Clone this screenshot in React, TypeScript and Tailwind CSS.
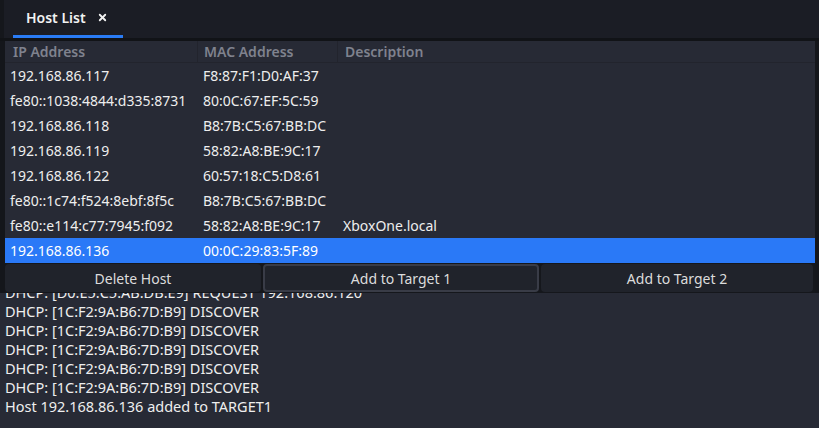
import { X } from 'lucide-react'

const hosts = [
  { ip: '192.168.86.117', mac: 'F8:87:F1:D0:AF:37', desc: '' },
  { ip: 'fe80::1038:4844:d335:8731', mac: '80:0C:67:EF:5C:59', desc: '' },
  { ip: '192.168.86.118', mac: 'B8:7B:C5:67:BB:DC', desc: '' },
  { ip: '192.168.86.119', mac: '58:82:A8:BE:9C:17', desc: '' },
  { ip: '192.168.86.122', mac: '60:57:18:C5:D8:61', desc: '' },
  { ip: 'fe80::1c74:f524:8ebf:8f5c', mac: 'B8:7B:C5:67:BB:DC', desc: '' },
  { ip: 'fe80::e114:c77:7945:f092', mac: '58:82:A8:BE:9C:17', desc: 'XboxOne.local' },
  { ip: '192.168.86.136', mac: '00:0C:29:83:5F:89', desc: '' },
]

const log = [
  'DHCP: [D0:E5:C5:AB:DB:E9] REQUEST 192.168.86.120',
  'DHCP: [1C:F2:9A:B6:7D:B9] DISCOVER',
  'DHCP: [1C:F2:9A:B6:7D:B9] DISCOVER',
  'DHCP: [1C:F2:9A:B6:7D:B9] DISCOVER',
  'DHCP: [1C:F2:9A:B6:7D:B9] DISCOVER',
  'DHCP: [1C:F2:9A:B6:7D:B9] DISCOVER',
  'Host 192.168.86.136 added to TARGET1',
]

export default function App() {
  return (
    <div
      className="w-[819px] h-[428px] overflow-hidden bg-[#14161b] flex flex-col text-[14px]"
      style={{ fontFamily: '"Noto Sans", sans-serif' }}
    >
      {/* tab bar */}
      <div className="h-[38px] shrink-0 bg-[#1b1d25] border-l-[4px] border-[#15171c] flex items-end pl-[9px]">
        <div className="w-[110px] h-[38px] border-b-[3px] border-[#2a7cf6] flex items-center pl-[13px] gap-[11px]">
          <span className="text-[#f2f2f2] font-semibold text-[14px]">Host List</span>
          <X size={11} strokeWidth={4} className="text-[#f2f2f2]" />
        </div>
      </div>
      <div className="h-[3px] shrink-0 bg-[#111317]" />

      {/* table */}
      <div className="flex-1 flex flex-col pl-[5px] pr-[4px] min-h-0">
        <div className="bg-[#272a35] shrink-0">
          <div className="h-[22px] flex items-center text-[#7f828e] font-semibold border-b border-[#22242d]">
            <div className="w-[193px] pl-[8px] border-r border-[#22242d] h-full flex items-center">IP Address</div>
            <div className="w-[140px] pl-[6px] border-r border-[#22242d] h-full flex items-center">MAC Address</div>
            <div className="flex-1 pl-[7px]">Description</div>
          </div>
          {hosts.map((h, i) => (
            <div
              key={i}
              className={`h-[25px] flex items-center text-[#eeeeee] ${i === hosts.length - 1 ? 'bg-[#2a79f7] text-white' : ''}`}
            >
              <div className="w-[193px] pl-[5px] whitespace-nowrap">{h.ip}</div>
              <div className="w-[140px] pl-[5px] whitespace-nowrap">{h.mac}</div>
              <div className="flex-1 pl-[5px] whitespace-nowrap">{h.desc}</div>
            </div>
          ))}
        </div>

        {/* buttons */}
        <div className="h-[30px] shrink-0 flex gap-[2px] py-[1px] pr-[2px] bg-[#15171c]">
          <button className="w-[256px] h-full rounded-[4px] bg-[#20232b] text-[#dcdcdc]">Delete Host</button>
          <button className="w-[276px] h-full rounded-[4px] bg-[#20232b] border-[2px] border-[#393c47] text-[#dcdcdc]">
            Add to Target 1
          </button>
          <button className="flex-1 h-full rounded-[4px] bg-[#20232b] text-[#dcdcdc]">Add to Target 2</button>
        </div>
      </div>

      {/* log */}
      <div className="h-[135px] shrink-0 bg-[#272a35] overflow-hidden">
        <div className="-mt-[10px] pl-[5px] text-[#eeeeee] text-[14.5px] leading-[19px]">
          {log.map((l, i) => (
            <div key={i} className="whitespace-nowrap">{l}</div>
          ))}
        </div>
      </div>
    </div>
  )
}
